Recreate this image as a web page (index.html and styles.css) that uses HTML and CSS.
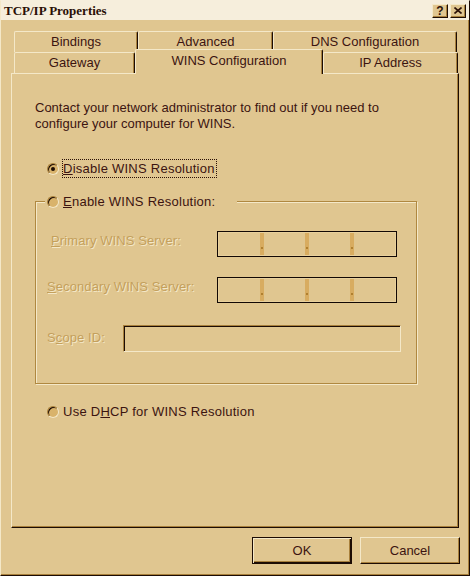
FILE: index.html
```html
<!DOCTYPE html>
<html lang="en">
<head>
  <meta charset="UTF-8">
  <title>TCP/IP Properties</title>
  <link rel="stylesheet" href="styles.css">
</head>
<body>
  <div class="window">
    <div class="titlebar">
      <span class="title">TCP/IP Properties</span>
      <span class="caption-buttons">
        <span class="cap-btn help">?</span>
        <span class="cap-btn">
          <svg width="8" height="7" viewBox="0 0 8 7"><path d="M0.5 0.5L7.5 6.5M7.5 0.5L0.5 6.5" stroke="#2a1006" stroke-width="1.6"/></svg>
        </span>
      </span>
    </div>

    <div class="tabs">
      <div class="tab-row">
        <div class="tab tab-bindings">Bindings</div>
        <div class="tab tab-advanced">Advanced</div>
        <div class="tab tab-dns">DNS Configuration</div>
      </div>
      <div class="tab-row">
        <div class="tab tab-gateway">Gateway</div>
        <div class="tab tab-wins selected">WINS Configuration</div>
        <div class="tab tab-ip">IP Address</div>
      </div>
    </div>

    <div class="panel">
      <p class="intro">Contact your network administrator to find out if you need to<br>configure your computer for WINS.</p>

      <div class="option option-disable">
        <span class="radio checked"></span>
        <span class="option-label focused"><u>D</u>isable WINS Resolution</span>
      </div>

      <div class="group">
        <div class="option group-head">
          <span class="radio"></span>
          <span class="option-label"><u>E</u>nable WINS Resolution:</span>
        </div>

        <div class="field field-primary">
          <span class="field-label disabled"><u>P</u>rimary WINS Server:</span>
          <div class="ip-box">
            <span class="seg"></span><span class="dot"></span>
            <span class="seg"></span><span class="dot"></span>
            <span class="seg"></span><span class="dot"></span>
            <span class="seg"></span>
          </div>
        </div>

        <div class="field field-secondary">
          <span class="field-label disabled"><u>S</u>econdary WINS Server:</span>
          <div class="ip-box">
            <span class="seg"></span><span class="dot"></span>
            <span class="seg"></span><span class="dot"></span>
            <span class="seg"></span><span class="dot"></span>
            <span class="seg"></span>
          </div>
        </div>

        <div class="field field-scope">
          <span class="field-label disabled">S<u>c</u>ope ID:</span>
          <div class="text-box"></div>
        </div>
      </div>

      <div class="option option-dhcp">
        <span class="radio"></span>
        <span class="option-label">Use D<u>H</u>CP for WINS Resolution</span>
      </div>
    </div>

    <div class="actions">
      <button class="btn default">OK</button>
      <button class="btn">Cancel</button>
    </div>
  </div>
</body>
</html>
```

FILE: styles.css
```css
body { margin: 0; background: #e0c690; font-family: "Liberation Sans", Arial, sans-serif; font-size: 13px; color: #3c1410; }
u { text-decoration: underline; text-underline-offset: 1px; }

.window { width: 470px; height: 576px; box-sizing: border-box; border: 1px solid; border-color: #f6eedc #1c0c04 #1c0c04 #f4e8c8; box-shadow: inset -1px -1px 0 #a8803c; background: #e0c690; }

/* title bar */
.titlebar { height: 19px; background: #f6eedc; display: flex; align-items: center; justify-content: space-between; padding: 0 3px 0 3px; }
.title { font-family: "Liberation Serif", "Times New Roman", serif; font-weight: bold; font-size: 13px; color: #2a1006; }
.caption-buttons { display: flex; gap: 2px; }
.cap-btn { width: 16px; height: 14px; box-sizing: border-box; background: #e0c690; border: 1px solid; border-color: #f4e8c8 #1c0c04 #1c0c04 #f4e8c8; box-shadow: inset -1px -1px 0 #a8803c; display: flex; align-items: center; justify-content: center; font-weight: bold; font-size: 12px; line-height: 12px; color: #2a1006; }

/* tabs */
.tabs { margin: 11px 0 0 13px; }
.tab-row { display: flex; align-items: flex-end; height: 21px; }
.tab { box-sizing: border-box; height: 21px; background: #e0c690; border-top: 1px solid #f4e8c8; border-left: 1px solid #f4e8c8; border-right: 1px solid #1c0c04; box-shadow: inset -1px 0 0 #a8803c; border-radius: 2px 2px 0 0; text-align: center; line-height: 20px; }
.tab-bindings { width: 124px; }
.tab-advanced { width: 135px; }
.tab-dns { width: 184px; }
.tab-gateway { width: 121px; }
.tab-wins { width: 188px; }
.tab-ip { width: 135px; }
.tab.selected { height: 25px; margin: -3px 0 -1px; position: relative; z-index: 1; line-height: 21px; padding-bottom: 3px; }

/* page */
.panel { margin-left: 10px; width: 448px; height: 455px; box-sizing: border-box; border: 1px solid; border-color: #f4e8c8 #1c0c04 #1c0c04 #f4e8c8; box-shadow: inset -1px -1px 0 #a8803c; padding-left: 23px; }
.intro { margin: 26px 0 0; line-height: 16px; }

.option { display: flex; align-items: center; height: 19px; }
.option-disable { margin: 27px 0 0 12px; }
.option-dhcp { margin: 18px 0 0 12px; }
.option-label { border: 1px dotted transparent; padding: 0 1px 0 0; line-height: 17px; letter-spacing: 0.25px; }
.option-label.focused { border-color: #2a1006; }

.radio { width: 12px; height: 12px; box-sizing: border-box; border-radius: 50%; background: #d9b36b; border: 1px solid; border-color: #a8803c #f4e8c8 #f4e8c8 #a8803c; box-shadow: inset 1px 1px 0 #1c0c04; margin-right: 3px; display: flex; align-items: center; justify-content: center; }
.radio.checked::after { content: ""; width: 4px; height: 4px; border-radius: 50%; background: #1c0c04; }

.group { margin-top: 23px; width: 382px; height: 183px; box-sizing: border-box; border: 1px solid #b08840; box-shadow: 1px 1px 0 #f4e8c8, inset 1px 1px 0 #f4e8c8; }
.group-head { width: max-content; margin: -10px 0 0 9px; padding: 0 20px 0 2px; background: #e0c690; }

.field { display: flex; align-items: flex-start; }
.field-label { line-height: 16px; letter-spacing: 0.1px; }
.disabled { color: #c4a05c; text-shadow: 1px 1px 0 #f4e8c8; }
.field-primary { margin-top: 20px; padding-left: 15px; }
.field-primary .field-label { width: 166px; padding-top: 2px; }
.field-secondary { margin-top: 20px; padding-left: 11px; }
.field-secondary .field-label { width: 170px; padding-top: 2px; }
.field-scope { margin-top: 22px; padding-left: 11px; }
.field-scope .field-label { width: 76px; padding-top: 5px; }

.ip-box { width: 180px; height: 26px; box-sizing: border-box; border: 1px solid #120804; box-shadow: inset 0 0 0 1px #e8d09c; display: flex; padding: 1px; }
.seg { flex: 1; }
.dot { width: 4px; background: #d8ac60; display: flex; align-items: flex-end; justify-content: center; padding-bottom: 6px; box-sizing: border-box; }
.dot::after { content: ""; width: 2px; height: 2px; background: #b08030; }

.text-box { width: 278px; height: 27px; box-sizing: border-box; border: 1px solid; border-color: #a8803c #f4e8c8 #f4e8c8 #a8803c; box-shadow: inset 1px 1px 0 #1c0c04; }

/* buttons */
.actions { display: flex; justify-content: flex-end; gap: 8px; margin-top: 9px; padding-right: 9px; }
.btn { width: 100px; height: 27px; padding: 0; background: #e0c690; font-family: inherit; font-size: 13px; color: #3c1410; border: 1px solid; border-color: #f4e8c8 #1c0c04 #1c0c04 #f4e8c8; box-shadow: inset -1px -1px 0 #a8803c; }
.btn.default { border-color: #1c0c04; box-shadow: inset 1px 1px 0 #f4e8c8, inset -1px -1px 0 #1c0c04, inset -2px -2px 0 #a8803c; }
```
